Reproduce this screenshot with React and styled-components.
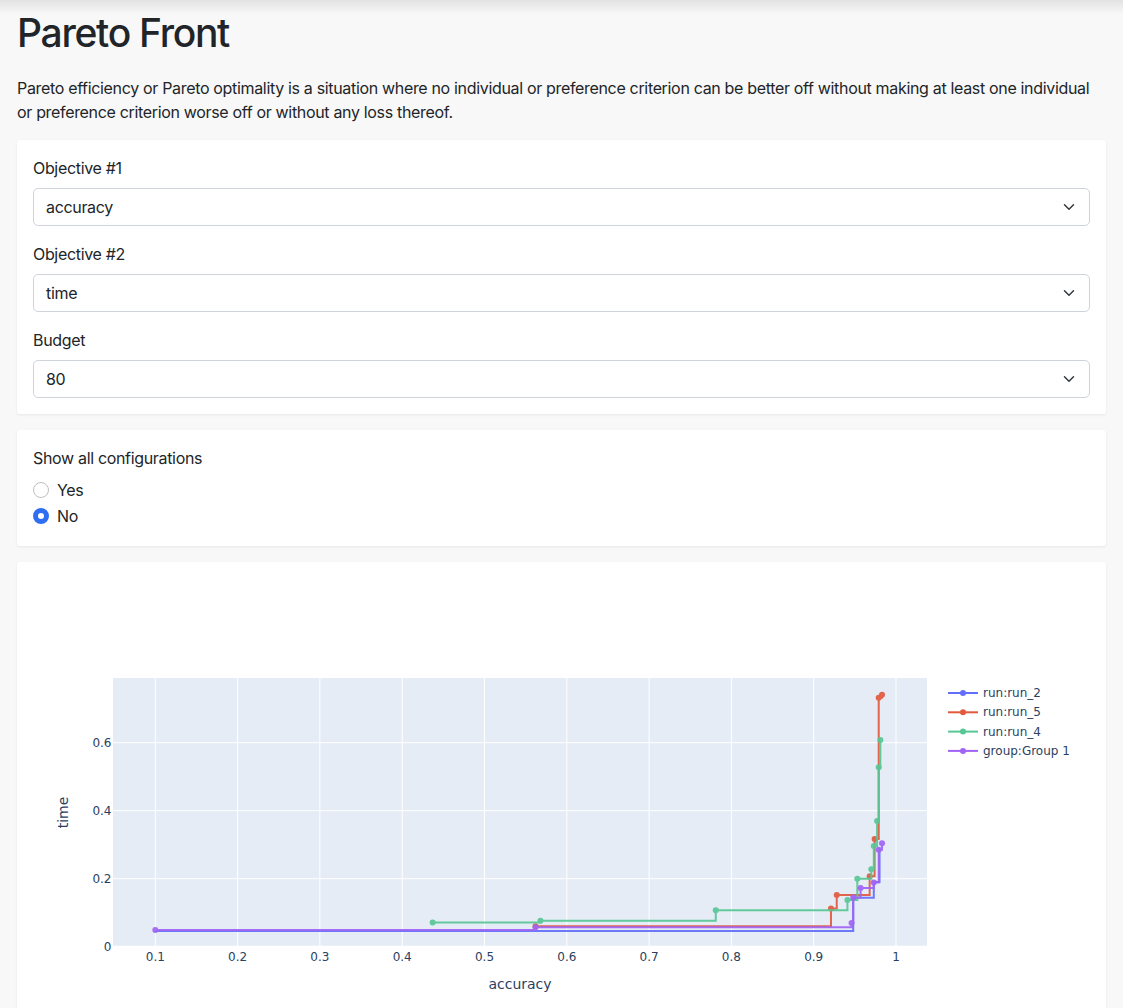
import React from 'react';
import styled, { createGlobalStyle } from 'styled-components';

const GlobalStyle = createGlobalStyle`
  html, body { margin: 0; padding: 0; }
  body {
    background: linear-gradient(to bottom, #e2e2e2 0px, #f8f8f8 14px) no-repeat, #f8f8f8;
    font-family: Inter, "Liberation Sans", sans-serif;
    letter-spacing: -0.33px;
    color: #212529;
    -webkit-font-smoothing: antialiased;
  }
`;

const Page = styled.div`
  padding: 0 17px 24px;
`;

const Title = styled.h1`
  margin: 0;
  padding-top: 9px;
  font-size: 39px;
  line-height: 48px;
  font-weight: 500;
  letter-spacing: -1.3px;
`;

const Lead = styled.p`
  margin: 19px 0 16px;
  font-size: 16px;
  line-height: 24px;
`;

const Card = styled.section`
  background: #fff;
  border-radius: 3px;
  box-shadow: 0 1px 3px rgba(0, 0, 0, 0.07);
  padding: 16px;
  margin-bottom: 16px;
`;

const Field = styled.div`
  & + & { margin-top: 16px; }
`;

const Label = styled.div`
  font-size: 16px;
  line-height: 24px;
  margin-bottom: 8px;
`;

const SelectBox = styled.div`
  display: flex;
  align-items: center;
  justify-content: space-between;
  height: 38px;
  box-sizing: border-box;
  border: 1px solid #ced4da;
  border-radius: 5px;
  padding: 0 14px 0 12px;
  font-size: 16px;
  background: #fff;
`;

const Chevron = () => (
  <svg width="12" height="8" viewBox="0 0 12 8" fill="none">
    <path d="M1.5 1.8 6 6.3l4.5-4.5" stroke="#343a40" strokeWidth="1.5" strokeLinecap="round" strokeLinejoin="round" />
  </svg>
);

const Select = ({ value }) => (
  <SelectBox>
    <span>{value}</span>
    <Chevron />
  </SelectBox>
);

const RadioRow = styled.label`
  display: flex;
  align-items: center;
  gap: 8px;
  height: 24px;
  margin-bottom: 2px;
  font-size: 16px;
`;

const RadioDot = styled.span`
  width: 16px;
  height: 16px;
  box-sizing: border-box;
  border-radius: 50%;
  border: ${p => (p.$checked ? '5px solid #2f6ef3' : '1px solid #bfbfbf')};
  background: #fff;
`;

const ChartCard = styled(Card)`
  padding: 16px;
`;

const ChartSvg = styled.svg`
  display: block;
  width: 100%;
  height: 450px;
  font-family: "DejaVu Sans", verdana, arial, sans-serif;
  letter-spacing: 0;
`;

const X = v => 122.3 + (v - 0.1) * 823;
const Y = v => 368.7 - v * 340;

const traces = [
  {
    name: 'run:run_2',
    color: '#636efa',
    pts: [[0.1, 0.046], [0.948, 0.144], [0.973, 0.19], [0.98, 0.29]],
    hideMarkers: true,
  },
  {
    name: 'run:run_5',
    color: '#e15a3e',
    pts: [[0.562, 0.06], [0.921, 0.112], [0.928, 0.152], [0.968, 0.207], [0.974, 0.317], [0.979, 0.732], [0.983, 0.741]],
  },
  {
    name: 'run:run_4',
    color: '#56c795',
    pts: [[0.437, 0.071], [0.568, 0.0765], [0.781, 0.107], [0.941, 0.137], [0.953, 0.2], [0.970, 0.228], [0.973, 0.296], [0.977, 0.37], [0.979, 0.528], [0.981, 0.608]],
  },
  {
    name: 'group:Group 1',
    color: '#a064f4',
    pts: [[0.1, 0.049], [0.562, 0.057], [0.946, 0.0697], [0.948, 0.145], [0.957, 0.173], [0.973, 0.189], [0.979, 0.285], [0.983, 0.304]],
  },
];

const stepPath = pts =>
  pts
    .map(([x, y], i) => (i === 0 ? `M${X(x)} ${Y(y)}` : `H${X(x)} V${Y(y)}`))
    .join(' ');

const xTicks = [0.1, 0.2, 0.3, 0.4, 0.5, 0.6, 0.7, 0.8, 0.9, 1];
const yTicks = [0, 0.2, 0.4, 0.6];

const Chart = () => (
  <ChartSvg viewBox="0 0 1057 450" preserveAspectRatio="xMinYMin meet">
    <rect x="80" y="100" width="814" height="268.7" fill="#e5ecf6" />
    {xTicks.map(t => (
      <line key={t} x1={X(t)} x2={X(t)} y1="100" y2="368.7" stroke="#fff" strokeWidth="1" />
    ))}
    {yTicks.map(t => (
      <line key={t} x1="80" x2="894" y1={Y(t)} y2={Y(t)} stroke="#fff" strokeWidth={t === 0 ? 2 : 1} />
    ))}
    {xTicks.map(t => (
      <text key={t} x={X(t)} y="383" textAnchor="middle" fontSize="12" fill="#2a3f5f">{String(t)}</text>
    ))}
    {yTicks.map(t => (
      <text key={t} x="78.5" y={Y(t) + 4} textAnchor="end" fontSize="12" fill="#2a3f5f">{String(t)}</text>
    ))}
    <text x="487" y="411" textAnchor="middle" fontSize="14" fill="#2a3f5f">accuracy</text>
    <text x="30.3" y="234.5" textAnchor="middle" fontSize="14" fill="#2a3f5f" transform="rotate(-90 30.3 234.5) translate(0 5)">time</text>
    <g>
      {traces.map(t => (
        <g key={t.name} opacity="0.92">
          <path d={stepPath(t.pts)} fill="none" stroke={t.color} strokeWidth="2" />
          {!t.hideMarkers && t.pts.map(([x, y], i) => (
            <circle key={i} cx={X(x)} cy={Y(y)} r="3" fill={t.color} />
          ))}
        </g>
      ))}
    </g>
    <g>
      {traces.map((t, i) => {
        const y = 115 + i * 19.3;
        return (
          <g key={t.name}>
            <line x1="915" x2="945" y1={y} y2={y} stroke={t.color} strokeWidth="2" />
            <circle cx="930" cy={y} r="3" fill={t.color} />
            <text x="950" y={y + 4} fontSize="12" fill="#2a3f5f">{t.name}</text>
          </g>
        );
      })}
    </g>
  </ChartSvg>
);

export default function App() {
  return (
    <>
      <GlobalStyle />
      <Page>
        <Title>Pareto Front</Title>
        <Lead>
          Pareto efficiency or Pareto optimality is a situation where no individual or preference criterion can be better off without making at least one individual or preference criterion worse off or without any loss thereof.
        </Lead>
        <Card>
          <Field>
            <Label>Objective #1</Label>
            <Select value="accuracy" />
          </Field>
          <Field>
            <Label>Objective #2</Label>
            <Select value="time" />
          </Field>
          <Field>
            <Label>Budget</Label>
            <Select value="80" />
          </Field>
        </Card>
        <Card>
          <Label>Show all configurations</Label>
          <RadioRow><RadioDot />Yes</RadioRow>
          <RadioRow><RadioDot $checked />No</RadioRow>
        </Card>
        <ChartCard>
          <Chart />
        </ChartCard>
      </Page>
    </>
  );
}
